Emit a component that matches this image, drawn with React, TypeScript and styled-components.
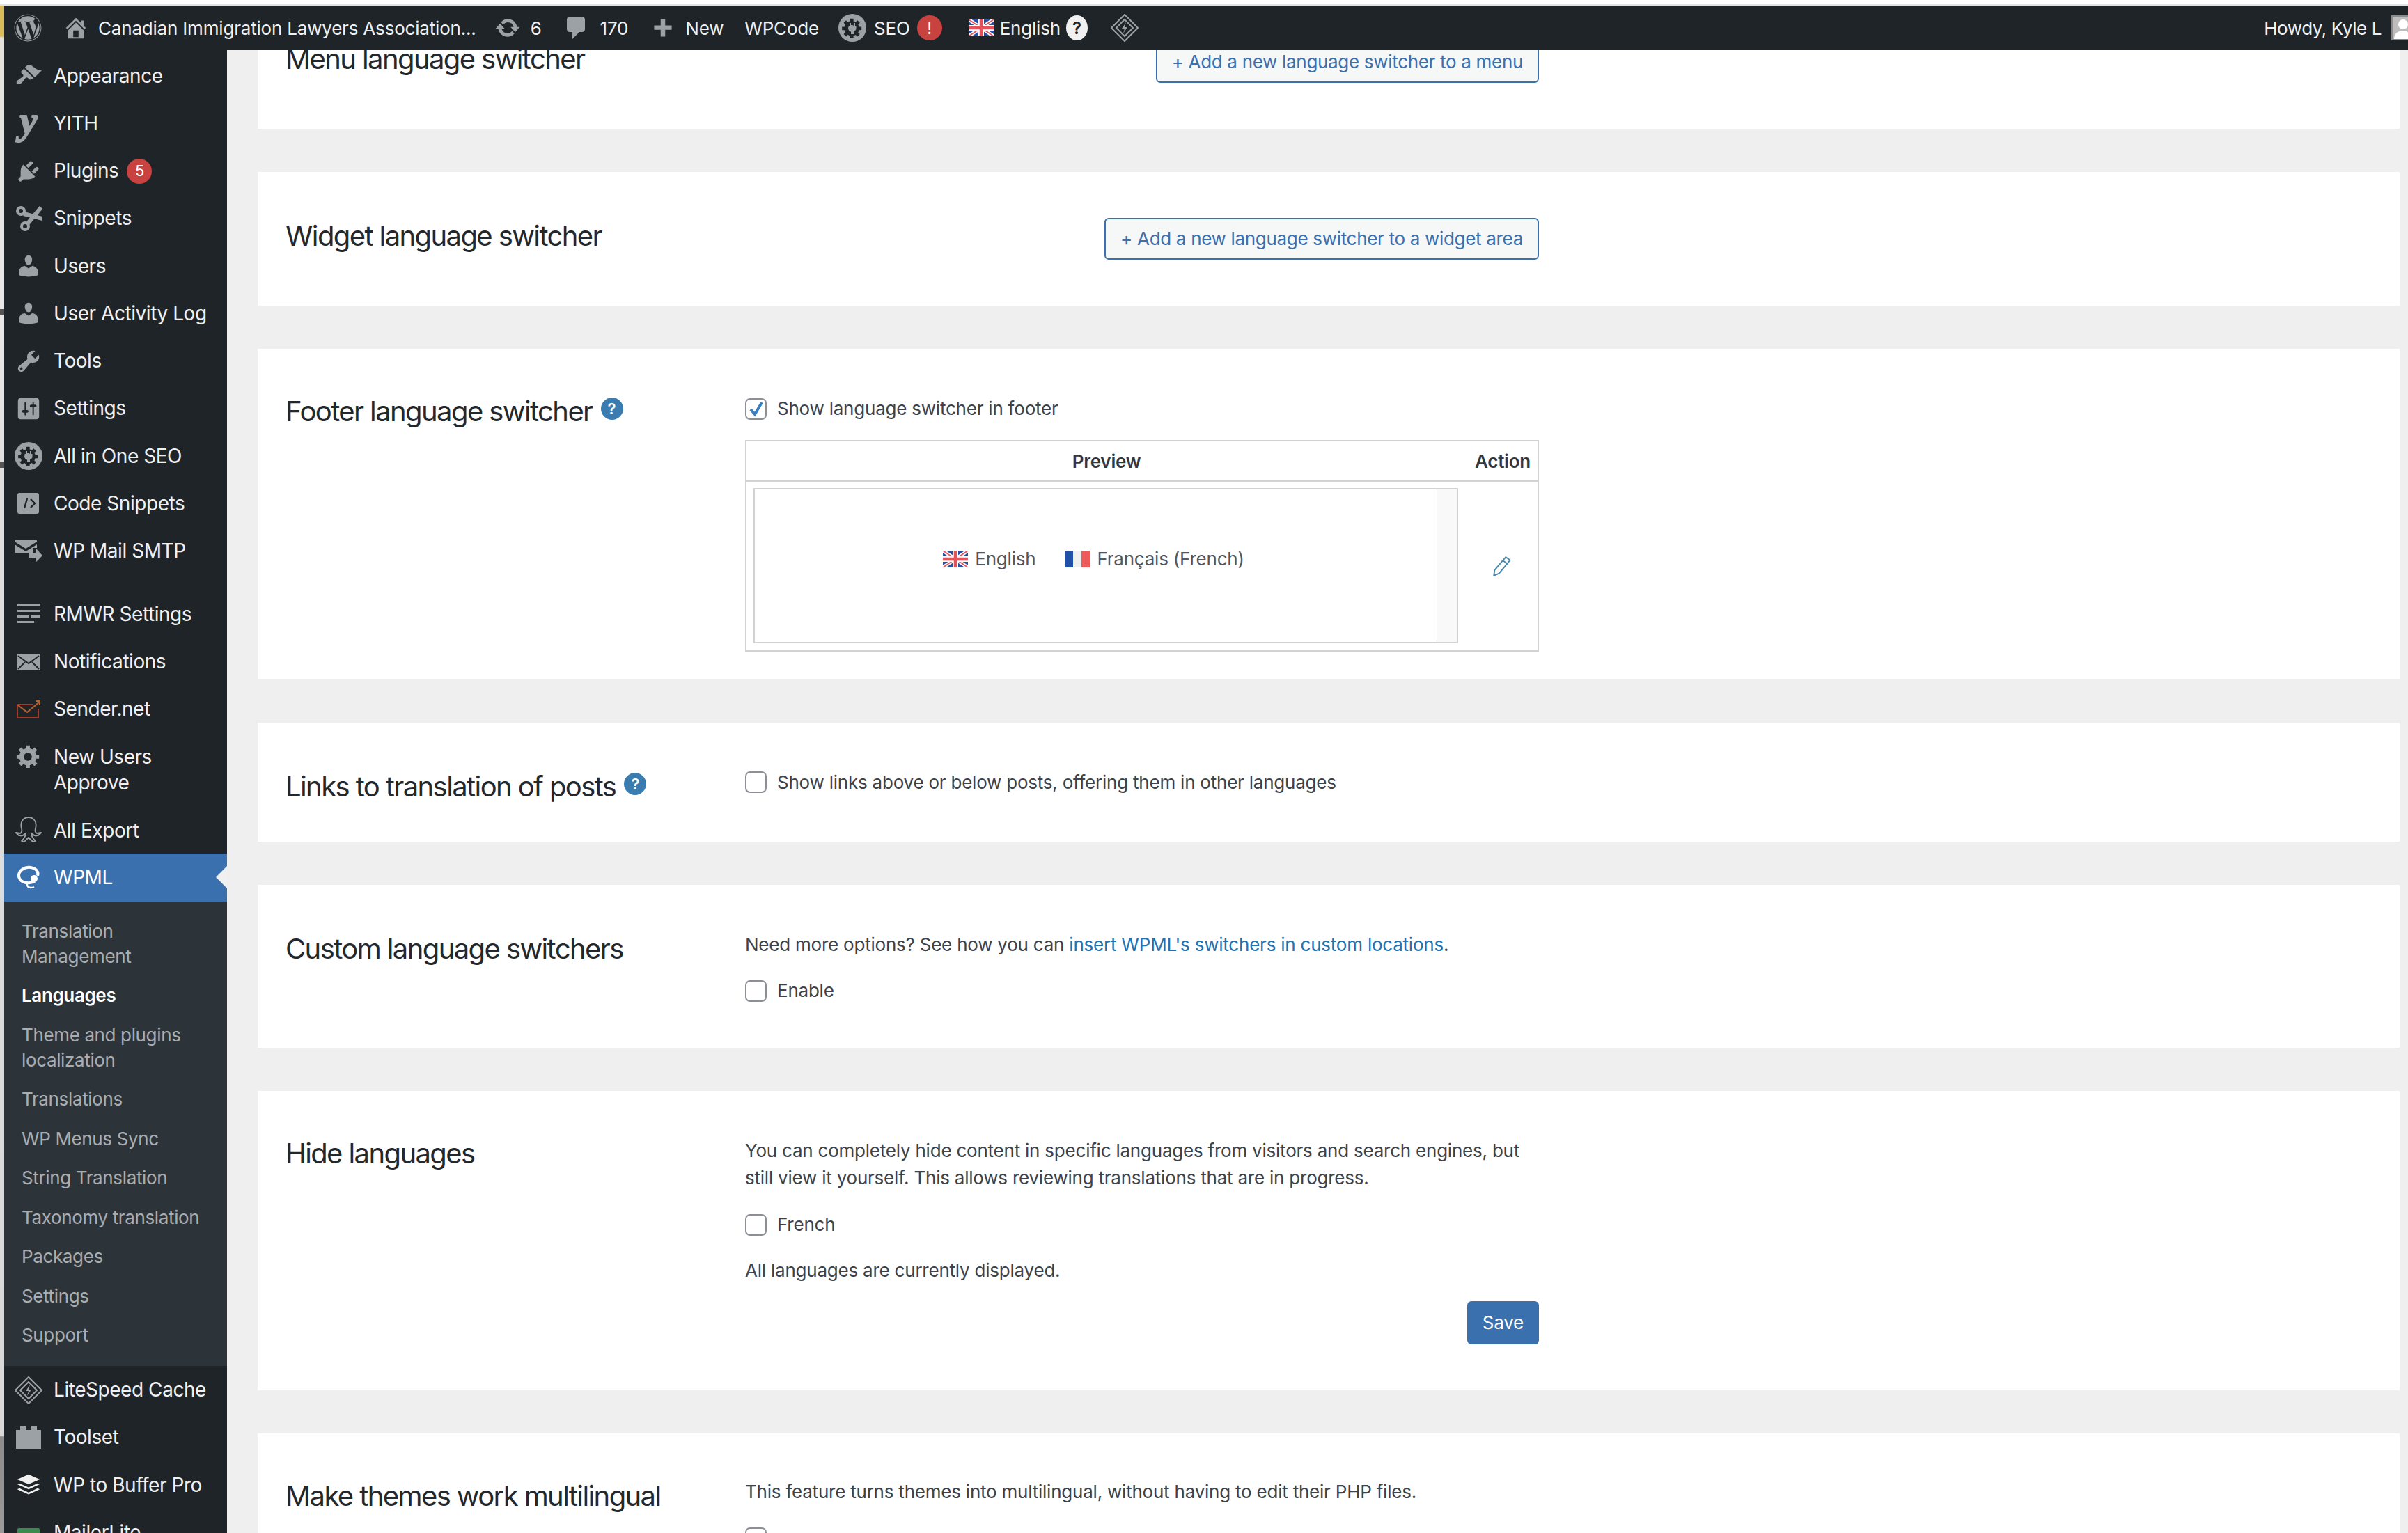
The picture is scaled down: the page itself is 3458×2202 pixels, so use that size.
import React from "react";
import styled, { createGlobalStyle } from "styled-components";
import { FaWordpress } from "react-icons/fa";

const GlobalStyle = createGlobalStyle`
  html, body { margin: 0; padding: 0; background: #fff; }
  body { font-family: Inter, "Liberation Sans", sans-serif; letter-spacing: -0.012em; }
  * { box-sizing: border-box; }
`;

// ------ Shell ------ //
const Page = styled.div`
  width: 3458px;
  height: 2202px;
  display: flex;
  flex-direction: column;
  overflow: hidden;
`;
const ScreenEdge = styled.div`
  height: 8px;
  flex: none;
  background: #fff;
  border-bottom: 2px solid #e2e2e2;
`;
const Desk = styled.div`
  flex: 1;
  display: flex;
  min-height: 0;
`;
const EdgeStrip = styled.div`
  width: 6px;
  flex: none;
  background: linear-gradient(
    #d9bb5a 0,
    #d9bb5a 44px,
    #e4e1da 46px,
    #e8e8e8 436px,
    #555 436px,
    #555 444px,
    #e8e8e8 444px,
    #e0e0e0 656px,
    #555 656px,
    #555 664px,
    #dedede 664px,
    #d8d8d8 2054px,
    #8c8c8c 2056px,
    #9a9a9a 100%
  );
`;
const Shell = styled.div`
  flex: 1;
  display: flex;
  flex-direction: column;
  min-width: 0;
`;

// ------ Admin bar ------ //
const AdminBar = styled.header`
  height: 64px;
  flex: none;
  display: flex;
  align-items: center;
  padding-left: 14px;
  background: #1f2428;
  color: #f0f0f1;
  font-size: 26px;
`;
const BarItem = styled.span<{ $ml?: number }>`
  display: inline-flex;
  align-items: center;
  flex: none;
  margin-left: ${p => p.$ml ?? 0}px;
  white-space: nowrap;
`;
const Howdy = styled.div`
  margin-left: auto;
  display: flex;
  align-items: center;
  gap: 14px;
  letter-spacing: -0.016em;
`;
const Avatar = styled.span`
  width: 24px;
  height: 36px;
  overflow: hidden;
  flex: none;
  background: #bdbdbd;
  border: 2px solid #8a8a8a;
  border-right: 0;
  display: block;
`;
const AlertBadge = styled.span`
  width: 36px;
  height: 36px;
  border-radius: 50%;
  background: #c8433f;
  color: #fff;
  font-size: 24px;
  display: flex;
  align-items: center;
  justify-content: center;
`;
const HelpBubble = styled.span`
  width: 31px;
  height: 36px;
  border-radius: 50%;
  background: #f0f0f1;
  color: #1f2428;
  font-size: 24px;
  font-weight: 600;
  display: flex;
  align-items: center;
  justify-content: center;
`;

// ------ Sidebar ------ //
const Workspace = styled.div`
  flex: 1;
  display: flex;
  min-height: 0;
`;
const Sidebar = styled.nav`
  width: 320px;
  flex: none;
  padding-top: 2px;
  background: #1f2428;
  color: #f0f0f1;
  font-size: 28px;
  letter-spacing: -0.016em;
  overflow: hidden;
`;
const MenuRow = styled.div<{ $active?: boolean; $tall?: boolean }>`
  position: relative;
  height: ${p => (p.$tall ? 106 : 68.25)}px;
  display: flex;
  align-items: center;
  padding: ${p => (p.$active ? 0 : 2)}px 0 0 15px;
  line-height: 37px;
  background: ${p => (p.$active ? "#3b70ae" : "transparent")};
  color: ${p => (p.$active ? "#fff" : "#f0f0f1")};
`;
const MenuIconSlot = styled.span<{ $alignTop?: boolean }>`
  width: 40px;
  height: 40px;
  flex: none;
  margin-right: 16px;
  display: flex;
  align-items: center;
  justify-content: center;
  align-self: ${p => (p.$alignTop ? "flex-start" : "center")};
  margin-top: ${p => (p.$alignTop ? 12 : 0)}px;
`;
const MenuLabel = styled.span`
  display: flex;
  align-items: center;
  gap: 12px;
`;
const MenuBadge = styled.span`
  width: 36px;
  height: 36px;
  border-radius: 50%;
  background: #c8433f;
  color: #fff;
  font-size: 22px;
  display: flex;
  align-items: center;
  justify-content: center;
`;
const MenuSeparator = styled.div`
  height: 22.5px;
`;
const ActivePointer = styled.span`
  position: absolute;
  right: 0;
  top: 50%;
  margin-top: -16px;
  border: 16px solid transparent;
  border-left: 0;
  border-right-color: #f0f0f1;
`;
const SubMenu = styled.div`
  background: #2d3439;
  padding: 15px 0 15px 25px;
  font-size: 26px;
  line-height: 36px;
  letter-spacing: -0.014em;
  color: #a9adb1;
`;
const SubItem = styled.div<{ $current?: boolean }>`
  padding: 10.25px 0;
  color: ${p => (p.$current ? "#fff" : "#a9adb1")};
  font-weight: ${p => (p.$current ? 600 : 400)};
`;
const YithMark = styled.span`
  font-family: "Liberation Serif", serif;
  font-style: italic;
  font-weight: 700;
  font-size: 56px;
  line-height: 40px;
  letter-spacing: 0;
  color: #9ca1a6;
  -webkit-text-stroke: 2px #9ca1a6;
  margin-top: -8px;
`;

// ------ Main column ------ //
const Main = styled.main`
  flex: 1;
  min-width: 0;
  background: #efefef;
  padding: 0 12px 0 44px;
  overflow: hidden;
  color: #3c434a;
  font-size: 26px;
  line-height: 36px;
  letter-spacing: -0.0085em;
`;
const Sections = styled.div`
  display: flex;
  flex-direction: column;
  gap: 62px;
  margin-top: -79px;
`;
const Card = styled.section`
  flex: none;
  display: grid;
  grid-template-columns: 660px 1140px;
  align-items: start;
  padding: 66px 40px;
  background: #fff;
`;
const CardTitle = styled.h3<{ $offset?: number }>`
  margin: ${p => p.$offset ?? 0}px 0 -30px;
  font-size: 40px;
  line-height: 48px;
  font-weight: 400;
  color: #23282d;
  display: flex;
  align-items: center;
  gap: 12px;
  letter-spacing: -0.04em;
`;
const HelpDot = styled.span`
  width: 32px;
  height: 32px;
  margin-top: -8px;
  border-radius: 50%;
  background: #3a7cb0;
  color: #fff;
  font-size: 22px;
  font-weight: 600;
  letter-spacing: 0;
  display: flex;
  align-items: center;
  justify-content: center;
`;
const CardBody = styled.div<{ $pad?: number; $trim?: number }>`
  min-width: 0;
  padding: ${p => p.$pad ?? 0}px 0;
  margin-bottom: ${p => -(p.$trim ?? 0)}px;
`;
const ButtonRow = styled.div`
  display: flex;
  justify-content: flex-end;
`;
const OutlineButton = styled.span`
  height: 60px;
  padding: 0 21px;
  display: inline-flex;
  align-items: center;
  background: #f6f7f7;
  border: 2px solid #3b70ae;
  border-radius: 6px;
  color: #3b70ae;
  white-space: nowrap;
  letter-spacing: -0.012em;
`;
const SaveButton = styled.span`
  height: 62px;
  padding: 0 22px;
  display: inline-flex;
  align-items: center;
  background: #3b70ae;
  border-radius: 6px;
  color: #fff;
`;
const CheckRow = styled.label<{ $mt?: number }>`
  display: flex;
  align-items: center;
  gap: 15px;
  height: 36px;
  margin-top: ${p => p.$mt ?? 0}px;
`;
const CheckBox = styled.span`
  width: 31px;
  height: 31px;
  flex: none;
  border: 2px solid #8c8f94;
  border-radius: 7px;
  background: #fff;
  display: flex;
  align-items: center;
  justify-content: center;
`;
const Para = styled.p<{ $mt?: number; $tight?: boolean }>`
  margin: ${p => p.$mt ?? 0}px 0 0;
  line-height: ${p => (p.$tight ? 39 : 36)}px;
`;
const TextLink = styled.a`
  color: #2271b1;
  text-decoration: none;
`;
const Actions = styled.div`
  display: flex;
  justify-content: flex-end;
  margin-top: 26px;
`;

// ------ Footer switcher table ------ //
const SwitcherTable = styled.div`
  margin: 27px 0 -26px;
  height: 304px;
  border: 2px solid #d2d2d2;
  display: flex;
  flex-direction: column;
`;
const TableHead = styled.div`
  height: 58px;
  flex: none;
  padding-top: 2px;
  display: grid;
  grid-template-columns: 1034px 1fr;
  align-items: center;
  border-bottom: 2px solid #d2d2d2;
  font-weight: 600;
  color: #32373c;
`;
const PreviewHead = styled.span`
  text-align: center;
`;
const ActionHead = styled.span`
  text-align: right;
  padding-right: 10px;
`;
const TableBody = styled.div`
  flex: 1;
  display: flex;
  align-items: center;
  padding: 0 0 0 10px;
`;
const PreviewFrame = styled.div`
  width: 1012px;
  height: 223px;
  margin-top: -1px;
  flex: none;
  display: flex;
  border: 2px solid #d2d2d2;
`;
const PreviewCanvas = styled.div`
  flex: 1;
  display: flex;
  align-items: center;
  justify-content: center;
  gap: 42px;
  padding: 0 6px 19px 0;
  color: #50575e;
`;
const PreviewGutter = styled.div`
  width: 29px;
  background: #f9f9f9;
  border-left: 1px solid #e6e6e6;
`;
const LangLink = styled.span`
  display: flex;
  align-items: center;
  gap: 10px;
  white-space: nowrap;
`;
const EditCell = styled.div`
  flex: 1;
  display: flex;
  justify-content: center;
  padding: 0 0 0 12px;
`;

// ------ Drawings ------ //
const Glyph = styled.svg<{ $w?: number; $h?: number; $color?: string }>`
  width: ${p => p.$w ?? 32}px;
  height: ${p => p.$h ?? p.$w ?? 32}px;
  flex: none;
  display: block;
  fill: ${p => p.$color ?? "#9ca1a6"};
`;

const PATHS = {
  brush: "M14.48 11.06L7.41 3.99l1.5-1.5c.5-.56 2.3-.47 3.51.32 1.21.8 1.43 1.28 2.91 2.1 1.18.64 2.45 1.26 4.45.85zm-.71.71L6.7 4.7 4.93 6.47c-.39.39-.39 1.02 0 1.41l1.06 1.06c.39.39.39 1.03 0 1.42-.6.6-1.43 1.11-2.21 1.69-.35.26-.7.53-1.01.84C1.43 13.23 1 14.96 1.7 15.65c.71.7 2.43.28 3.77-1.07.31-.31.58-.66.85-1.01.57-.78 1.08-1.61 1.69-2.21.39-.39 1.02-.39 1.41 0l1.06 1.06c.39.39 1.02.39 1.41 0z",
  plug: "M13.11 4.36L9.87 7.6 8 5.73l3.24-3.24c.35-.34 1.05-.2 1.56.32.52.51.66 1.21.31 1.55zm-8 1.77l.91-1.12 9.01 9.01-1.19.84c-.71.71-2.63 1.16-3.82 1.16H6.14L4.9 17.26c-.59.59-1.54.59-2.12 0-.59-.58-.59-1.53 0-2.12l1.24-1.24v-3.88c0-1.13.4-3.19 1.09-3.89zm7.26 3.97l3.24-3.24c.34-.35 1.04-.21 1.55.31.52.51.66 1.21.31 1.55l-3.24 3.25z",
  user: "M10 9.25c-2.27 0-2.73-3.44-2.73-3.44C7 4.02 7.82 2 9.97 2c2.16 0 2.98 2.02 2.71 3.81 0 0-.41 3.44-2.68 3.44zm0 2.57L12.72 10c2.39 0 4.52 2.33 4.52 4.53v2.49s-3.65 1.13-7.24 1.13c-3.65 0-7.24-1.13-7.24-1.13v-2.49c0-2.25 1.94-4.48 4.47-4.48z",
  wrench: "M16.68 9.77c-1.34 1.34-3.3 1.67-4.95.99l-5.41 6.52c-.99.99-2.59.99-3.58 0s-.99-2.59 0-3.57l6.52-5.42c-.68-1.65-.35-3.61.99-4.95 1.28-1.28 3.12-1.62 4.72-1.06l-2.89 2.89 2.82 2.82 2.86-2.87c.53 1.58.18 3.39-1.08 4.65zM3.81 16.21c.4.39 1.04.39 1.43 0 .4-.4.4-1.04 0-1.43-.39-.4-1.03-.4-1.43 0-.39.39-.39 1.03 0 1.43z",
  sliders: "M18 16V4c0-1.1-.9-2-2-2H4c-1.1 0-2 .9-2 2v12c0 1.1.9 2 2 2h12c1.1 0 2-.9 2-2zM8 11h1c.55 0 1 .45 1 1s-.45 1-1 1H8v1.5c0 .28-.22.5-.5.5s-.5-.22-.5-.5V13H6c-.55 0-1-.45-1-1s.45-1 1-1h1V5.5c0-.28.22-.5.5-.5s.5.22.5.5V11zm5-2h-1c-.55 0-1-.45-1-1s.45-1 1-1h1V5.5c0-.28.22-.5.5-.5s.5.22.5.5V7h1c.55 0 1 .45 1 1s-.45 1-1 1h-1v5.5c0 .28-.22.5-.5.5s-.5-.22-.5-.5V9z",
  home: "M16 8.5l1.53 1.53-1.06 1.06L10 4.62l-6.47 6.47-1.06-1.06L10 2.5l4 4v-2h2v4zm-6-2.46l6 5.99V18H4v-5.97zM12 17v-5H8v5h4z",
  update: "M10.2 3.28c3.53 0 6.43 2.61 6.92 6h2.08l-3.5 4-3.5-4h2.32c-.45-1.97-2.21-3.44-4.32-3.44-1.45 0-2.73.71-3.54 1.78L4.95 5.66C6.23 4.2 8.11 3.28 10.2 3.28zm-.4 13.44c-3.52 0-6.43-2.61-6.92-6H.8l3.5-4c1.17 1.33 2.33 2.67 3.5 4H5.48c.45 1.97 2.21 3.44 4.32 3.44 1.45 0 2.73-.71 3.54-1.78l1.71 1.95c-1.28 1.46-3.15 2.39-5.25 2.39z",
  comment: "M5 2h9c1.1 0 2 .9 2 2v7c0 1.1-.9 2-2 2h-2l-5 5v-5H5c-1.1 0-2-.9-2-2V4c0-1.1.9-2 2-2z",
  plus: "M17 8v3.5h-5.2V17H8.2v-5.5H3V8h5.2V3h3.6v5z",
  gear: "M18 12h-2.18c-.17.7-.44 1.35-.81 1.93l1.54 1.54-2.1 2.1-1.54-1.54c-.58.36-1.23.63-1.91.79V19H8v-2.18c-.68-.16-1.33-.43-1.91-.79l-1.54 1.54-2.12-2.12 1.54-1.54c-.36-.58-.63-1.23-.79-1.91H1V9.03h2.17c.16-.7.44-1.35.8-1.94L2.43 5.55l2.1-2.1 1.54 1.54c.58-.37 1.24-.64 1.93-.81V2h3v2.18c.68.16 1.33.43 1.91.79l1.54-1.54 2.12 2.12-1.54 1.54c.36.59.64 1.24.8 1.94H18V12zm-8.5 1.5c1.66 0 3-1.34 3-3s-1.34-3-3-3-3 1.34-3 3 1.34 3 3 3z",
  toolset: "M1 4.5h3V2h4v2.5h4V2h4v2.5h3V18H1z",
  layers: "M10 1.5l9 4-9 4-9-4zM2.8 8.7L10 12l7.2-3.3L19 9.5l-9 4-9-4zM2.8 12.7L10 16l7.2-3.3 1.8.8-9 4-9-4z",
};

const Icon = ({ d, w, h, color }: { d: string; w?: number; h?: number; color?: string }) => (
  <Glyph viewBox="0 0 20 20" $w={w} $h={h} $color={color}>
    <path d={d} />
  </Glyph>
);

const SeoBadge = ({ w, h, fg = "#1f2428" }: { w: number; h: number; fg?: string }) => (
  <Glyph viewBox="0 0 40 40" $w={w} $h={h}>
    <circle cx="20" cy="20" r="20" />
    <g fill={fg} transform="translate(3.5 3.5) scale(1.65)">
      <path d={PATHS.gear} />
    </g>
    <path d="M16 13h2v4h4v-4h2v4h1.5v4c0 2-1.5 3.5-3.5 3.6V29h-4v-4.4c-2-.1-3.5-1.6-3.5-3.6v-4H16z" fill="#9ca1a6" />
  </Glyph>
);

const LiteSpeedMark = ({ w, h }: { w: number; h: number }) => (
  <Glyph viewBox="0 0 40 40" $w={w} $h={h} preserveAspectRatio="none" fill="none">
    <g fill="none" stroke="#9ca1a6" strokeWidth="2">
      <path d="M20 1L39 20 20 39 1 20z" />
      <path d="M20 8L32 20 20 32 8 20z" />
    </g>
    <path d="M22 12l-6 9h4l-2 7 6-9h-4z" fill="#9ca1a6" />
  </Glyph>
);

const UkFlag = () => (
  <svg width="36" height="24" viewBox="0 0 36 24" style={{ display: "block", flex: "none" }}>
    <rect width="36" height="24" fill="#2a4fa0" />
    <path d="M0 0L36 24M36 0L0 24" stroke="#fff" strokeWidth="5" />
    <path d="M0 0L36 24M36 0L0 24" stroke="#e5535a" strokeWidth="1.8" />
    <path d="M18 0V24M0 12H36" stroke="#fff" strokeWidth="8" />
    <path d="M18 0V24M0 12H36" stroke="#e5535a" strokeWidth="4.5" />
  </svg>
);

const FrFlag = () => (
  <svg width="36" height="24" viewBox="0 0 36 24" style={{ display: "block", flex: "none" }}>
    <rect width="12" height="24" fill="#2150a8" />
    <rect x="12" width="12" height="24" fill="#f0f0f0" />
    <rect x="24" width="12" height="24" fill="#ee5a5a" />
  </svg>
);

const Tick = () => (
  <svg width="22" height="24" viewBox="0 0 22 24">
    <path d="M3 13l6 7L19 3" fill="none" stroke="#3a7fc2" strokeWidth="4" />
  </svg>
);

const Pencil = () => (
  <svg width="30" height="32" viewBox="0 0 26 30">
    <path d="M18 3l6 4L9 25l-7 3 1-7.5zM14.5 8l6 4" fill="none" stroke="#4b88ae" strokeWidth="1.8" strokeLinejoin="round" />
  </svg>
);

const ScissorMark = () => (
  <svg width="40" height="36" viewBox="0 0 40 36">
    <g fill="none" stroke="#9ca1a6">
      <circle cx="9" cy="7" r="5" strokeWidth="4" />
      <circle cx="15" cy="29" r="5" strokeWidth="4" />
      <path d="M18 26L38 2" strokeWidth="6" />
      <path d="M13 11l27 7" strokeWidth="6" />
    </g>
  </svg>
);

const CodeBox = () => (
  <svg width="32" height="30" viewBox="0 0 32 30">
    <rect width="31" height="30" rx="3" fill="#9ca1a6" />
    <path d="M14 8l-4 14M19 9l6 6-6 6" fill="none" stroke="#1f2428" strokeWidth="2.4" />
  </svg>
);

const MailSend = () => (
  <svg width="40" height="34" viewBox="0 0 40 34">
    <path d="M2 0h28c1 0 2 1 2 2v1L16 13 0 3V2C0 1 1 0 2 0zM0 7l16 10 16-10v5h-6v8H2c-1 0-2-1-2-2z" fill="#9ca1a6" />
    <path d="M20 19h10v-7l10 11-10 10v-7H20z" fill="#9ca1a6" />
  </svg>
);

const TextLines = () => (
  <svg width="34" height="28" viewBox="0 0 34 28">
    <path d="M1 1.5h32M1 9.5h32M1 17.5h16M21 17.5h12M1 25.5h24" stroke="#9ca1a6" strokeWidth="3" fill="none" />
  </svg>
);

const Envelope = () => (
  <svg width="34" height="24" viewBox="0 0 34 24">
    <rect width="34" height="24" rx="1.5" fill="#9ca1a6" />
    <path d="M2 3l15 11L32 3M2 22l10-10M32 22L22 12" fill="none" stroke="#1f2428" strokeWidth="2" />
  </svg>
);

const SenderMark = () => (
  <svg width="34" height="26" viewBox="0 0 34 26">
    <path d="M24 6H1v19h30V12" fill="none" stroke="#a53a2a" strokeWidth="2" />
    <path d="M2 7l13 10L33 2M27 1h6v6" fill="none" stroke="#b5622e" strokeWidth="2" />
  </svg>
);

const Octopus = () => (
  <svg width="38" height="40" viewBox="0 0 38 40">
    <path d="M9 17C6 5 14 1 19 1s13 4 10 16c-1 4 0 6 2 7l6-1-4 4c-4 1-8-1-10-3 0 4 3 8 6 11l-4 1-6-6-6 6-4-1c3-3 6-7 6-11-2 2-6 4-10 3l-4-4 6 1c2-1 3-3 2-7z" fill="none" stroke="#9ca1a6" strokeWidth="1.8" strokeLinejoin="round" />
  </svg>
);

const WpmlMark = () => (
  <svg width="34" height="36" viewBox="0 0 34 36">
    <path d="M26 24C18 28 5 27 3 17 2 8 12 3 20 4c8 1 12 7 10 12" fill="none" stroke="#fff" strokeWidth="4" />
    <circle cx="25" cy="20" r="5" fill="#fff" />
    <path d="M15 26c-1 5 2 7 5 7s5-1 5-1" fill="none" stroke="#fff" strokeWidth="2.5" />
  </svg>
);

const AvatarFigure = () => (
  <svg width="22" height="32" viewBox="0 0 22 32" style={{ display: "block" }}>
    <circle cx="15" cy="11" r="7" fill="#fff" />
    <path d="M2 32c0-8 6-12 13-12s9 4 9 12z" fill="#fff" />
  </svg>
);

const MailerTile = styled.span`
  width: 32px;
  height: 24px;
  margin-top: 12px;
  background: #3d8a4e;
  border-radius: 2px;
`;

// ------ Data ------ //
type MenuEntry = { label: React.ReactNode; icon: React.ReactNode; badge?: string; gapBefore?: boolean; tall?: boolean };

const TOP_MENU: MenuEntry[] = [
  { label: "Appearance", icon: <Icon d={PATHS.brush} w={40} /> },
  { label: "YITH", icon: <YithMark>y</YithMark> },
  { label: "Plugins", icon: <Icon d={PATHS.plug} w={38} />, badge: "5" },
  { label: "Snippets", icon: <ScissorMark /> },
  { label: "Users", icon: <Icon d={PATHS.user} w={38} /> },
  { label: "User Activity Log", icon: <Icon d={PATHS.user} w={38} /> },
  { label: "Tools", icon: <Icon d={PATHS.wrench} w={38} /> },
  { label: "Settings", icon: <Icon d={PATHS.sliders} w={38} /> },
  { label: "All in One SEO", icon: <SeoBadge w={40} h={40} /> },
  { label: "Code Snippets", icon: <CodeBox /> },
  { label: "WP Mail SMTP", icon: <MailSend /> },
  { label: "RMWR Settings", icon: <TextLines />, gapBefore: true },
  { label: "Notifications", icon: <Envelope /> },
  { label: "Sender.net", icon: <SenderMark /> },
  { label: <>New Users<br />Approve</>, icon: <Icon d={PATHS.gear} w={38} />, tall: true },
  { label: "All Export", icon: <Octopus /> },
];

const SUB_MENU = [
  "Translation Management",
  "Languages",
  "Theme and plugins localization",
  "Translations",
  "WP Menus Sync",
  "String Translation",
  "Taxonomy translation",
  "Packages",
  "Settings",
  "Support",
];

const BOTTOM_MENU: MenuEntry[] = [
  { label: "LiteSpeed Cache", icon: <LiteSpeedMark w={40} h={40} /> },
  { label: "Toolset", icon: <Icon d={PATHS.toolset} w={40} /> },
  { label: "WP to Buffer Pro", icon: <Icon d={PATHS.layers} w={36} color="#f0f0f1" /> },
  { label: "MailerLite", icon: <MailerTile /> },
];

const renderMenu = (items: MenuEntry[]) =>
  items.map((item, i) => (
    <React.Fragment key={i}>
      {item.gapBefore && <MenuSeparator />}
      <MenuRow $tall={item.tall}>
        <MenuIconSlot $alignTop={item.tall}>{item.icon}</MenuIconSlot>
        <MenuLabel>
          <span>{item.label}</span>
          {item.badge && <MenuBadge>{item.badge}</MenuBadge>}
        </MenuLabel>
      </MenuRow>
    </React.Fragment>
  ));

export default function App() {
  return (
    <>
      <GlobalStyle />
      <Page>
        <ScreenEdge />
        <Desk>
          <EdgeStrip />
          <Shell>
            <AdminBar>
              <BarItem><FaWordpress size={40} color="#9ca1a6" /></BarItem>
              <BarItem $ml={30}><Icon d={PATHS.home} w={38} /></BarItem>
              <BarItem $ml={13}>Canadian Immigration Lawyers Association...</BarItem>
              <BarItem $ml={26}><Icon d={PATHS.update} w={38} /></BarItem>
              <BarItem $ml={14}>6</BarItem>
              <BarItem $ml={30}><Icon d={PATHS.comment} w={40} /></BarItem>
              <BarItem $ml={14}>170</BarItem>
              <BarItem $ml={32}><Icon d={PATHS.plus} w={36} /></BarItem>
              <BarItem $ml={14}>New</BarItem>
              <BarItem $ml={30}>WPCode</BarItem>
              <BarItem $ml={28}><SeoBadge w={40} h={40} /></BarItem>
              <BarItem $ml={11}>SEO</BarItem>
              <BarItem $ml={10}><AlertBadge>!</AlertBadge></BarItem>
              <BarItem $ml={38}><UkFlag /></BarItem>
              <BarItem $ml={9}>English</BarItem>
              <BarItem $ml={8}><HelpBubble>?</HelpBubble></BarItem>
              <BarItem $ml={33}><LiteSpeedMark w={40} h={40} /></BarItem>
              <Howdy>
                <span>Howdy, Kyle L</span>
                <Avatar><AvatarFigure /></Avatar>
              </Howdy>
            </AdminBar>
            <Workspace>
              <Sidebar>
                {renderMenu(TOP_MENU)}
                <MenuRow $active>
                  <MenuIconSlot><WpmlMark /></MenuIconSlot>
                  <MenuLabel><span>WPML</span></MenuLabel>
                  <ActivePointer />
                </MenuRow>
                <SubMenu>
                  {SUB_MENU.map(name => (
                    <SubItem key={name} $current={name === "Languages"}>{name}</SubItem>
                  ))}
                </SubMenu>
                {renderMenu(BOTTOM_MENU)}
              </Sidebar>
              <Main>
                <Sections>
                  <Card>
                    <CardTitle $offset={2}>Menu language switcher</CardTitle>
                    <CardBody>
                      <ButtonRow><OutlineButton>+ Add a new language switcher to a menu</OutlineButton></ButtonRow>
                    </CardBody>
                  </Card>
                  <Card>
                    <CardTitle $offset={2}>Widget language switcher</CardTitle>
                    <CardBody>
                      <ButtonRow><OutlineButton>+ Add a new language switcher to a widget area</OutlineButton></ButtonRow>
                    </CardBody>
                  </Card>
                  <Card>
                    <CardTitle>Footer language switcher <HelpDot>?</HelpDot></CardTitle>
                    <CardBody>
                      <CheckRow $mt={2}><CheckBox><Tick /></CheckBox>Show language switcher in footer</CheckRow>
                      <SwitcherTable>
                        <TableHead>
                          <PreviewHead>Preview</PreviewHead>
                          <ActionHead>Action</ActionHead>
                        </TableHead>
                        <TableBody>
                          <PreviewFrame>
                            <PreviewCanvas>
                              <LangLink><UkFlag />English</LangLink>
                              <LangLink><FrFlag />Français (French)</LangLink>
                            </PreviewCanvas>
                            <PreviewGutter />
                          </PreviewFrame>
                          <EditCell><Pencil /></EditCell>
                        </TableBody>
                      </SwitcherTable>
                    </CardBody>
                  </Card>
                  <Card>
                    <CardTitle $offset={2}>Links to translation of posts <HelpDot>?</HelpDot></CardTitle>
                    <CardBody $pad={1.5}>
                      <CheckRow>
                        <CheckBox />Show links above or below posts, offering them in other languages
                      </CheckRow>
                    </CardBody>
                  </Card>
                  <Card>
                    <CardTitle $offset={2}>Custom language switchers</CardTitle>
                    <CardBody $trim={2}>
                      <Para $mt={2}>Need more options? See how you can <TextLink>insert WPML's switchers in custom locations</TextLink>.</Para>
                      <CheckRow $mt={30}><CheckBox />Enable</CheckRow>
                    </CardBody>
                  </Card>
                  <Card>
                    <CardTitle>Hide languages</CardTitle>
                    <CardBody>
                      <Para $tight>You can completely hide content in specific languages from visitors and search engines, but still view it yourself. This allows reviewing translations that are in progress.</Para>
                      <CheckRow $mt={30}><CheckBox />French</CheckRow>
                      <Para $mt={30}>All languages are currently displayed.</Para>
                      <Actions><SaveButton>Save</SaveButton></Actions>
                    </CardBody>
                  </Card>
                  <Card>
                    <CardTitle>Make themes work multilingual</CardTitle>
                    <CardBody>
                      <Para>This feature turns themes into multilingual, without having to edit their PHP files.</Para>
                      <CheckRow $mt={30}><CheckBox /></CheckRow>
                    </CardBody>
                  </Card>
                </Sections>
              </Main>
            </Workspace>
          </Shell>
        </Desk>
      </Page>
    </>
  );
}
